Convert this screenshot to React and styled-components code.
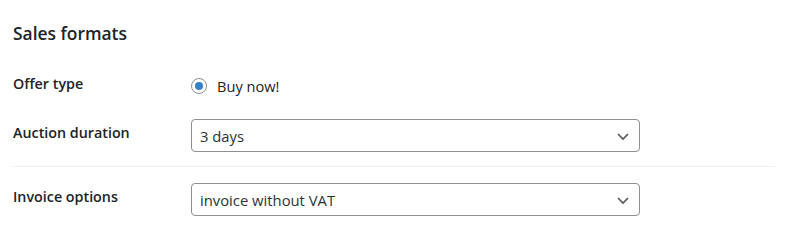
import React from "react";
import styled, { createGlobalStyle } from "styled-components";

const GlobalStyle = createGlobalStyle`
  body {
    margin: 0;
    background: #fff;
    color: #1d2327;
    font-family: "Open Sans", "Noto Sans", Arial, sans-serif;
  }
`;

const Page = styled.div`
  width: 785px;
  height: 232px;
  box-sizing: border-box;
  padding: 20px 10px 0 13px;
`;

const Title = styled.h2`
  margin: 0;
  font-size: 17.4px;
  line-height: 26px;
  font-weight: 600;
`;

const Row = styled.div`
  display: grid;
  grid-template-columns: 178px 449px;
  align-items: center;
  margin-top: ${(p) => p.$top}px;
  min-height: ${(p) => p.$height || 33}px;
`;

const Label = styled.div`
  font-size: 14.3px;
  font-weight: 600;
  line-height: 20px;
  margin-bottom: 5px;
`;

const Divider = styled.hr`
  border: 0;
  border-top: 1px solid #f0f0f1;
  margin: 14px 0 0;
`;

const RadioLine = styled.label`
  display: flex;
  align-items: center;
  gap: 10px;
  font-size: 14.6px;
  line-height: 20px;
`;

const Radio = styled.span`
  width: 16px;
  height: 16px;
  box-sizing: border-box;
  border: 1px solid #8c8f94;
  border-radius: 50%;
  display: flex;
  align-items: center;
  justify-content: center;
  &::after {
    content: "";
    width: 8px;
    height: 8px;
    border-radius: 50%;
    background: #3582c4;
  }
`;

const Select = styled.div`
  height: 33px;
  box-sizing: border-box;
  border: 1px solid #8c8f94;
  border-radius: 4px;
  display: flex;
  align-items: center;
  justify-content: space-between;
  padding: 0 8px 0 8px;
  font-size: 14.8px;
  color: #2c3338;
`;

const Chevron = () => (
  <svg width="16" height="16" viewBox="0 0 16 16">
    <path d="M3 6 L8 11 L13 6" fill="none" stroke="#50575e" strokeWidth="1.6" />
  </svg>
);

export default function App() {
  return (
    <Page>
      <GlobalStyle />
      <Title>Sales formats</Title>
      <Row $top={24} $height={32}>
        <Label>Offer type</Label>
        <RadioLine>
          <Radio />
          Buy now!
        </RadioLine>
      </Row>
      <Row $top={17}>
        <Label>Auction duration</Label>
        <Select>
          3 days
          <Chevron />
        </Select>
      </Row>
      <Divider />
      <Row $top={16}>
        <Label>Invoice options</Label>
        <Select>
          invoice without VAT
          <Chevron />
        </Select>
      </Row>
    </Page>
  );
}
